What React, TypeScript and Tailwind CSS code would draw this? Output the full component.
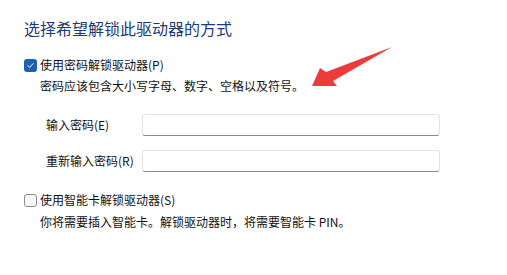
import React from "react";

const font = { fontFamily: '"Noto Sans CJK SC", "Noto Sans", sans-serif' };

function Checkbox({ checked }: { checked: boolean }) {
  if (checked) {
    return (
      <span className="flex h-[13px] w-[13px] shrink-0 items-center justify-center rounded-[3px] bg-[#1d5fb3]">
        <svg viewBox="0 0 12 12" className="h-[9px] w-[9px]">
          <path d="M2.5 6.2 L5 8.5 L9.5 3.5" fill="none" stroke="#fff" strokeWidth="1.3" strokeLinecap="round" strokeLinejoin="round" />
        </svg>
      </span>
    );
  }
  return <span className="h-[13px] w-[13px] shrink-0 rounded-[3px] border border-[#8b8b8b] bg-[#f7f7f7]" />;
}

function PasswordRow({ label }: { label: string }) {
  return (
    <div className="flex h-[22px] items-center">
      <span className="w-[96px] text-[12px] text-[#111]">{label}</span>
      <div className="h-[22px] w-[298px] rounded-[3px] border border-[#e3e3e3] border-b-[#8a8a8a] bg-white" />
    </div>
  );
}

export default function App() {
  return (
    <div className="relative h-[275px] w-[507px] overflow-hidden bg-white" style={font}>
      <div className="flex flex-col pl-[24px] pt-[17px]">
        <h1 className="text-[16px] leading-[22px] font-normal text-[#1c3b72]">选择希望解锁此驱动器的方式</h1>

        <label className="mt-[18px] flex h-[16px] items-center gap-[3px] text-[12px] text-[#111]">
          <Checkbox checked />
          <span>使用密码解锁驱动器(P)</span>
        </label>
        <p className="mt-[5px] pl-[16px] text-[12px] leading-[16px] text-[#111]">
          密码应该包含大小写字母、数字、空格以及符号。
        </p>

        <div className="mt-[20px] flex flex-col gap-[14px] pl-[22px]">
          <PasswordRow label="输入密码(E)" />
          <PasswordRow label="重新输入密码(R)" />
        </div>

        <label className="mt-[20px] flex h-[16px] items-center gap-[3px] text-[12px] text-[#111]">
          <Checkbox checked={false} />
          <span>使用智能卡解锁驱动器(S)</span>
        </label>
        <p className="mt-[6px] pl-[16px] text-[12px] leading-[16px] text-[#111]">
          你将需要插入智能卡。解锁驱动器时，将需要智能卡 PIN。
        </p>
      </div>

      {/* red annotation arrow */}
      <svg className="absolute left-0 top-0" width="507" height="275" viewBox="0 0 507 275">
        <polygon
          points="312,86 320,68 326,72 392,47 333,81 337,86"
          fill="#ec3b3b"
        />
      </svg>
    </div>
  );
}
